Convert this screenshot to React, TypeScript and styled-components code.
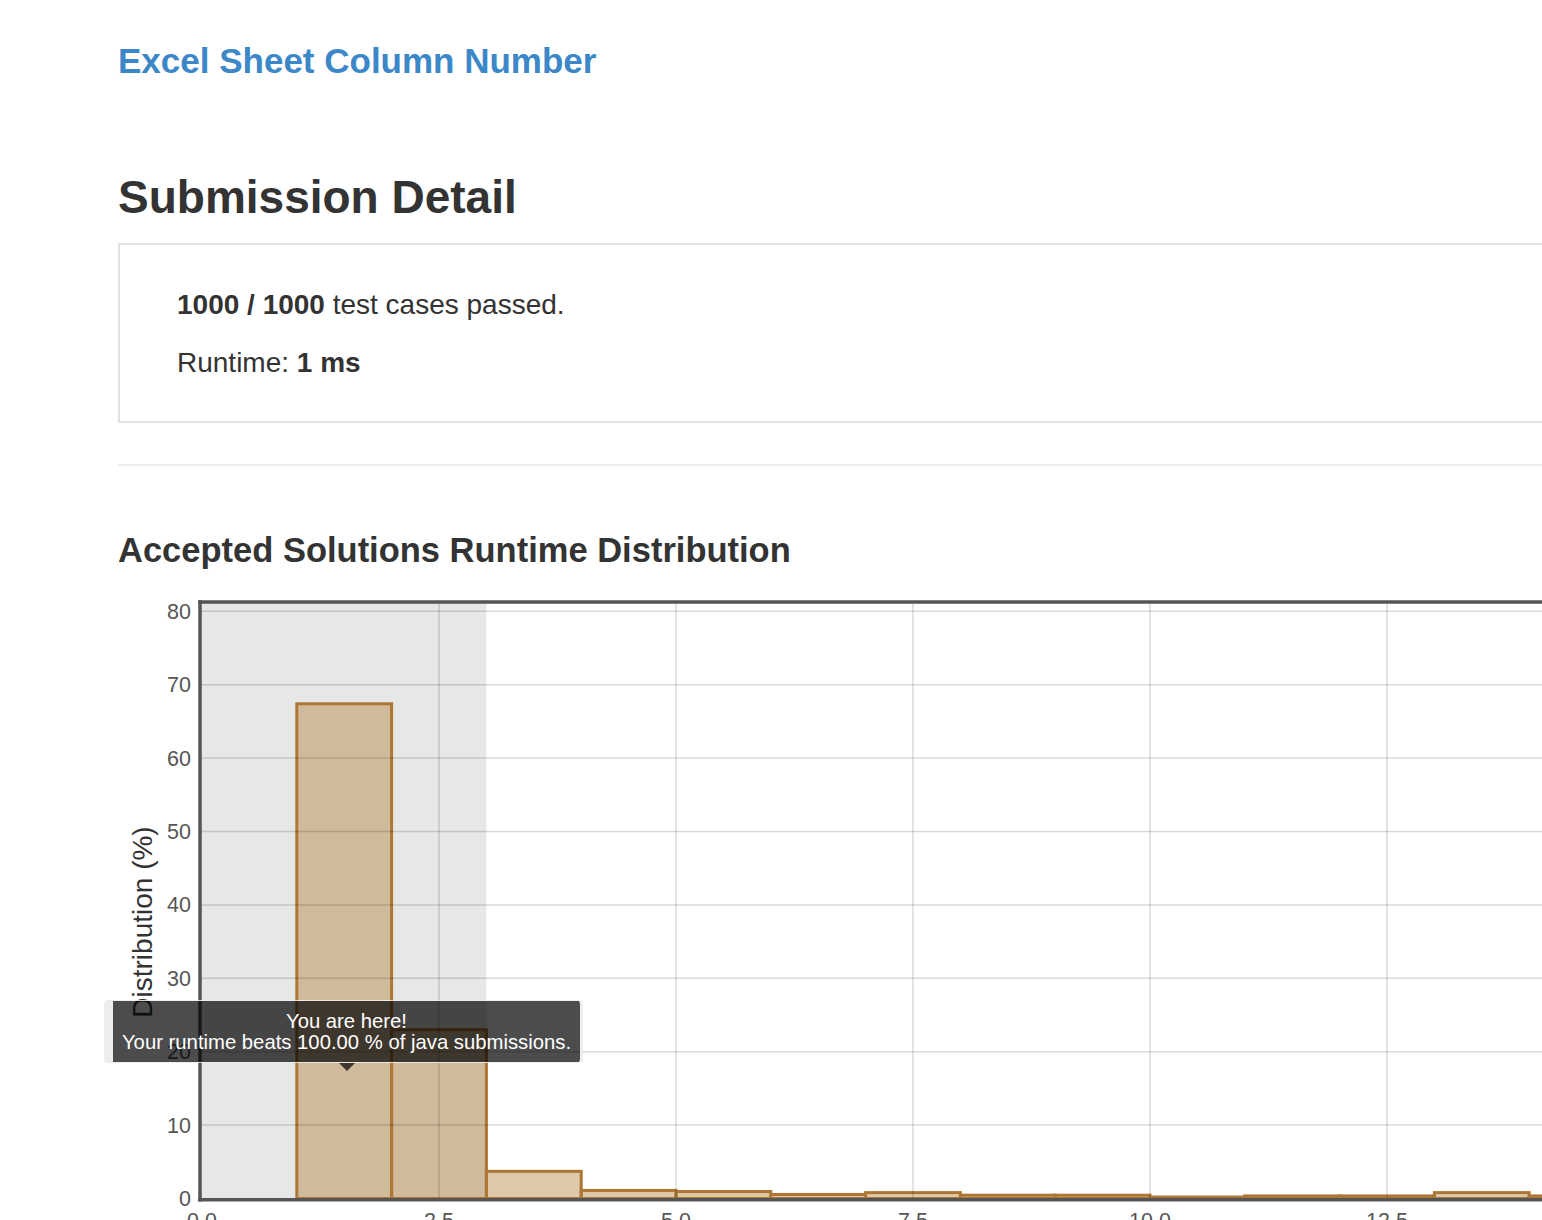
import React from 'react';
import styled, { createGlobalStyle } from 'styled-components';

const GlobalStyle = createGlobalStyle`
  html, body {
    margin: 0;
    padding: 0;
    overflow: hidden;
    background: #ffffff;
  }
`;

const Page = styled.div`
  width: 1700px;
  padding: 41px 0 0 118px;
  font-family: 'Liberation Sans', Arial, sans-serif;
  color: #333333;
`;

const TitleLink = styled.a`
  display: block;
  font-size: 35px;
  font-weight: 700;
  line-height: 40px;
  color: #3b87c8;
  text-decoration: none;
`;

const PageHeading = styled.h2`
  margin: 90px 0 0;
  font-size: 46px;
  font-weight: 700;
  line-height: 52px;
  color: #333333;
`;

const ResultBox = styled.div`
  margin-top: 20px;
  border: 2px solid #e2e2e2;
  padding: 44px 57px 42px;
`;

const ResultLine = styled.p<{ $gap?: number }>`
  margin: ${(p) => p.$gap ?? 0}px 0 0;
  font-size: 28px;
  line-height: 32px;
  color: #333333;

  b {
    font-weight: 700;
  }
`;

const Divider = styled.hr`
  margin: 41px 0 0;
  height: 2px;
  border: 0;
  background: #eeeeee;
`;

const SectionHeading = styled.h3`
  margin: 64px 0 0;
  font-size: 34.5px;
  font-weight: 700;
  line-height: 40px;
  color: #333333;
`;

const ChartWrap = styled.div`
  position: relative;
  margin-top: 20px;
  height: 660px;
`;

const Tooltip = styled.div`
  position: absolute;
  left: -14px;
  top: 410px;
  width: 479px;
  box-sizing: border-box;
  padding: 10px 0 9px;
  border: 1px solid rgba(236, 236, 236, 0.9);
  border-left-width: 9px;
  border-right-width: 3px;
  border-radius: 4px;
  background: rgba(0, 0, 0, 0.7);
  background-clip: padding-box;
  text-align: center;
  color: #ffffff;
  font-size: 20.3px;
  line-height: 21px;

  &::after {
    content: '';
    position: absolute;
    left: 226px;
    bottom: -9px;
    border-left: 8px solid transparent;
    border-right: 8px solid transparent;
    border-top: 8px solid rgba(0, 0, 0, 0.7);
  }
`;

const TooltipLine = styled.div`
  white-space: nowrap;
`;

const X = (u: number) => 84 + u * 94.8;
const Y = (v: number) => 608.5 - v * 7.34;

const bars: [number, number][] = [
  [1, 67.4],
  [2, 23.0],
  [3, 3.7],
  [4, 1.1],
  [5, 0.95],
  [6, 0.55],
  [7, 0.8],
  [8, 0.45],
  [9, 0.45],
  [10, 0.2],
  [11, 0.35],
  [12, 0.35],
  [13, 0.8],
  [14, 0.35],
  [15, 0.3],
];

const yTicks = [0, 10, 20, 30, 40, 50, 60, 70, 80];
const xTicks = [0, 2.5, 5, 7.5, 10, 12.5, 15];

const RuntimeChart: React.FC = () => (
  <svg width={1580} height={660} style={{ display: 'block' }}>
    <rect x={82} y={12} width={X(3) - 82} height={608.5 - 12} fill="#e7e7e7" />
    {bars.map(([u, v]) => (
      <rect
        key={u}
        x={X(u)}
        y={Y(v)}
        width={94.8}
        height={v * 7.34}
        fill="rgba(167, 111, 31, 0.375)"
        stroke="#ad7633"
        strokeWidth={3}
      />
    ))}
    {yTicks.slice(1).map((v) => (
      <line key={v} x1={82} x2={1580} y1={Y(v)} y2={Y(v)} stroke="rgba(0,0,0,0.15)" strokeWidth={1.5} />
    ))}
    {xTicks.slice(1).map((u) => (
      <line key={u} x1={X(u)} x2={X(u)} y1={12} y2={608.5} stroke="rgba(0,0,0,0.15)" strokeWidth={1.5} />
    ))}
    <line x1={80.25} x2={1580} y1={12} y2={12} stroke="#555555" strokeWidth={3.5} />
    <line x1={82} x2={82} y1={10.25} y2={611.5} stroke="#555555" strokeWidth={3.5} />
    <line x1={80.25} x2={1580} y1={609.8} y2={609.8} stroke="#555555" strokeWidth={3.5} />
    <g fontFamily="'Liberation Sans', Arial, sans-serif" fontSize={21.5} fill="#555555">
      {yTicks.map((v) => (
        <text key={v} x={73} y={Y(v) + 7.5} textAnchor="end">
          {v}
        </text>
      ))}
      {xTicks.map((u) => (
        <text key={u} x={X(u)} y={638} textAnchor="middle">
          {u.toFixed(1)}
        </text>
      ))}
    </g>
    <text
      x={34}
      y={332}
      transform="rotate(-90 34 332)"
      textAnchor="middle"
      fontFamily="'Liberation Sans', Arial, sans-serif"
      fontSize={28}
      fill="#333333"
    >
      Distribution (%)
    </text>
  </svg>
);

export default function App() {
  return (
    <>
      <GlobalStyle />
      <Page>
        <TitleLink href="#">Excel Sheet Column Number</TitleLink>
        <PageHeading>Submission Detail</PageHeading>
        <ResultBox>
          <ResultLine>
            <b>1000 / 1000</b> test cases passed.
          </ResultLine>
          <ResultLine $gap={26}>
            Runtime: <b>1 ms</b>
          </ResultLine>
        </ResultBox>
        <Divider />
        <SectionHeading>Accepted Solutions Runtime Distribution</SectionHeading>
        <ChartWrap>
          <RuntimeChart />
          <Tooltip>
            <TooltipLine>You are here!</TooltipLine>
            <TooltipLine>Your runtime beats 100.00 % of java submissions.</TooltipLine>
          </Tooltip>
        </ChartWrap>
      </Page>
    </>
  );
}
